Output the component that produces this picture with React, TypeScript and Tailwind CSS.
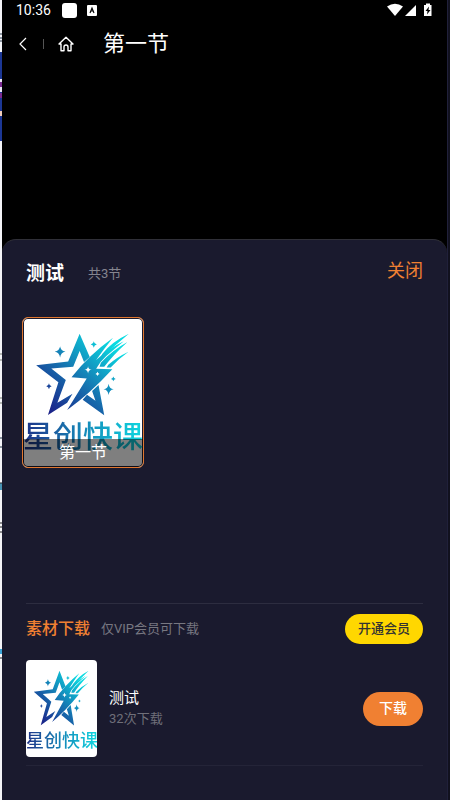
import { useId } from 'react';

const episodes = [{ id: 1, title: '第一节' }];
const materials = [{ id: 1, title: '测试', downloads: 32 }];

function StarLogo({ className }: { className?: string }) {
  const id = useId();

  return (
    <svg viewBox="27 27 356 300" preserveAspectRatio="none" className={className} aria-hidden="true">
      <defs>
        <linearGradient id={id} gradientUnits="userSpaceOnUse" x1="95" y1="300" x2="285" y2="95">
          <stop offset="0" stopColor="#1b2088" />
          <stop offset="0.45" stopColor="#166fae" />
          <stop offset="1" stopColor="#0adbe2" />
        </linearGradient>
      </defs>
      <g fill={`url(#${id})`}>
        <path d="M195 74 L161 156 L66 167 L132 218 L101 315 L158 279 L174 252 L129 279 L154 211 L111 177 L176 172 L195 125 L208 158 L225 143 Z" />
        <path d="M294 86 Q222 138 171 203 L216 207 L158 300 Q225 252 292 179 L244 178 Q254 158 274 140 L326 96 Q280 118 244 152 Q268 118 294 86 Z" />
        <path d="M341 74 Q290 98 262 134 L256 148 Q290 118 341 74 Z" />
        <path d="M337 98 Q292 122 258 160 L254 172 L268 172 Q293 138 337 98 Z" />
        <path d="M340 127 Q304 144 280 166 L275 174 L287 174 Q309 149 340 127 Z" />
        <path d="M251 226 L268 316 L204 270 L217 255 L242 273 L232 244 Z" />
        <path d="M137 111 Q139 125 153 127 Q139 129 137 144 Q135 129 121 127 Q135 125 137 111 Z" />
        <path d="M237 96 Q238 104 246 106 Q238 108 237 115 Q236 108 228 106 Q236 104 237 96 Z" />
        <path d="M104 221 Q105 229 112 230 Q105 231 104 239 Q103 231 96 230 Q103 229 104 221 Z" />
        <path d="M281 222 Q283 237 296 239 Q283 241 281 256 Q279 241 266 239 Q279 237 281 222 Z" />
        <path d="M295 201 Q296 207 302 208 Q296 209 295 215 Q294 209 288 208 Q294 207 295 201 Z" />
      </g>
      <path
        fill="#fff"
        d="M220 170 Q221 180 231 181 Q221 182 220 192 Q219 182 209 181 Q219 180 220 170 Z M248 187 Q249 192 254 193 Q249 194 248 199 Q247 194 242 193 Q247 192 248 187 Z"
      />
    </svg>
  );
}

function StatusBar() {
  return (
    <div className="flex h-5 items-center pl-3.5 pr-3 font-[Roboto,sans-serif] text-sm leading-5">
      <span>10:36</span>
      <span className="ml-[11px] size-[15px] rounded-[3px] bg-white" />
      <svg viewBox="0 0 10 11" className="ml-2.5 h-[11px] w-[10px]" aria-hidden="true">
        <rect width="10" height="11" rx="1" fill="#fff" />
        <path d="M3 8 L5 3 L7 8 M4 6 H6" fill="none" stroke="#000" strokeWidth="1.1" />
      </svg>
      <svg viewBox="0 0 48 16" className="ml-auto h-4 w-12" aria-hidden="true">
        <path d="M0 4.5 Q8 -1 16 4.5 L8 14 Z" fill="#fff" />
        <path d="M29 3 V14 H18 Z" fill="#fff" />
        <path d="M37 3 H39 V1.5 H43 V3 H44.500 V14 H37 Z" fill="#fff" />
        <path d="M42 4.500 L38.500 9 H40.500 L40 12.500 L43.500 8 H41.500 Z" fill="#000" />
      </svg>
    </div>
  );
}

// edge of the page that stays visible behind the player
function PageEdge() {
  return (
    <svg viewBox="0 0 2 800" preserveAspectRatio="xMinYMin slice" className="h-[800px] w-[2px] shrink-0" aria-hidden="true">
      <rect width="2" height="800" fill="#f4f4f8" />
      <path d="M0 34 H2 M0 38 H2 M0 41 H2 M0 438 H2 M0 447 H2" stroke="#26384a" />
      <rect y="52" width="2" height="89" fill="#1c3795" />
      <rect y="79" width="2" height="13" fill="#e8e4f5" />
      <rect y="82" width="2" height="5" fill="#7a2a92" />
      <rect y="93" width="2" height="5" fill="#7a2a92" />
      <rect y="111" width="2" height="5" fill="#f0cdbd" />
      <path d="M0 354 H2 M0 360 H2 M0 398 H2 M0 403 H2" stroke="#b5b8b5" strokeWidth="2" />
      <rect y="483" width="2" height="7" fill="#4a94b4" />
      <path d="M0 483 H2 M0 523 H2 M0 527 H2 M0 532 H2 M0 658 H2" stroke="#222" />
      <rect y="649" width="2" height="5" fill="#3aa5d8" />
    </svg>
  );
}

export default function App() {
  return (
    <div className="flex min-h-screen w-full overflow-hidden bg-[#1a1a2e] font-[Roboto,'Noto_Sans_CJK_SC',sans-serif] text-white">
      <PageEdge />

      <main className="flex min-w-0 flex-1 flex-col bg-black">
        <header className="h-[239px]">
          <StatusBar />
          <nav className="flex h-12 items-center pl-4">
            <button type="button" aria-label="返回">
              <svg viewBox="0 0 10 14" className="h-[14px] w-[10px]" fill="none" stroke="#fff" strokeWidth="1.2">
                <path d="M8 1 L2 7 L8 13" />
              </svg>
            </button>
            <span className="ml-[15px] h-[10px] w-px bg-[#555]" />
            <button type="button" aria-label="首页" className="ml-3.5">
              <svg viewBox="0 0 16 16" className="size-4" fill="none" stroke="#fff" strokeWidth="1.4" strokeLinejoin="round">
                <path d="M1 8 L8 1.200 L15 8 H13 V14.800 H10 V11 Q10 9 8 9 Q6 9 6 11 V14.800 H3 V8 Z" />
              </svg>
            </button>
            <h1 className="ml-[29px] text-[22px] leading-8">第一节</h1>
          </nav>
        </header>

        <section className="flex-1 rounded-t-[14px] border-t border-[#303038] bg-[#1a1a2e] px-6 pb-8">
          <div className="flex h-[77px] items-center pb-2.5">
            <h2 className="text-[19px] leading-7 font-bold">测试</h2>
            <span className="ml-6 text-[13px] text-[#85858f]">共3节</span>
            <button type="button" className="ml-auto pb-1.5 text-[18px] leading-6 text-[#f08032]">
              关闭
            </button>
          </div>

          <ul className="-mx-1 flex h-[286px] items-start gap-3">
            {episodes.map((episode) => (
              <li key={episode.id}>
                <button
                  type="button"
                  className="relative flex h-[151px] w-[122px] flex-col overflow-hidden rounded-md border border-[#e07830] bg-white ring-1 ring-[#1a1a2e] ring-inset"
                >
                  <StarLogo className="h-[101px] w-full shrink-0" />
                  <span className="block bg-linear-to-r from-[#1d2f86] via-[#1487b8] to-[#10d8e0] bg-clip-text text-[30px] leading-9 font-medium whitespace-nowrap text-transparent">
                    星创快课
                  </span>
                  <span className="absolute inset-x-0 bottom-0 h-7 bg-black/50 text-center text-base leading-7">
                    {episode.title}
                  </span>
                </button>
              </li>
            ))}
          </ul>

          <div className="flex h-[50px] items-center border-t border-[#2d2d40]">
            <h3 className="text-[16px] font-medium text-[#f08032]">素材下载</h3>
            <span className="ml-[11px] text-[13px] text-[#777781]">仅VIP会员可下载</span>
            <button
              type="button"
              className="ml-auto h-[30px] rounded-full bg-[#ffd700] px-[13px] text-[13px] font-medium text-[#333]"
            >
              开通会员
            </button>
          </div>

          <ul>
            {materials.map((item) => (
              <li key={item.id} className="flex items-center border-b border-[#242438] pt-[7px] pb-2">
                <div className="h-[97px] w-[71px] overflow-hidden rounded bg-white">
                  <StarLogo className="h-17 w-full" />
                  <span className="block bg-linear-to-r from-[#1d2f86] via-[#1487b8] to-[#10d8e0] bg-clip-text text-[18px] leading-[26px] font-medium whitespace-nowrap text-transparent">
                    星创快课
                  </span>
                </div>
                <div className="ml-3">
                  <p className="text-[15px] leading-5">{item.title}</p>
                  <p className="text-[13px] leading-[22px] text-[#6f6f79]">{item.downloads}次下载</p>
                </div>
                <button
                  type="button"
                  className="ml-auto h-[34px] rounded-full bg-[#f08032] px-4 text-[14px] font-medium"
                >
                  下载
                </button>
              </li>
            ))}
          </ul>
        </section>
      </main>

      <div className="w-[3px] shrink-0 border-l border-[#20203a] bg-[#11111e]" />
    </div>
  );
}
